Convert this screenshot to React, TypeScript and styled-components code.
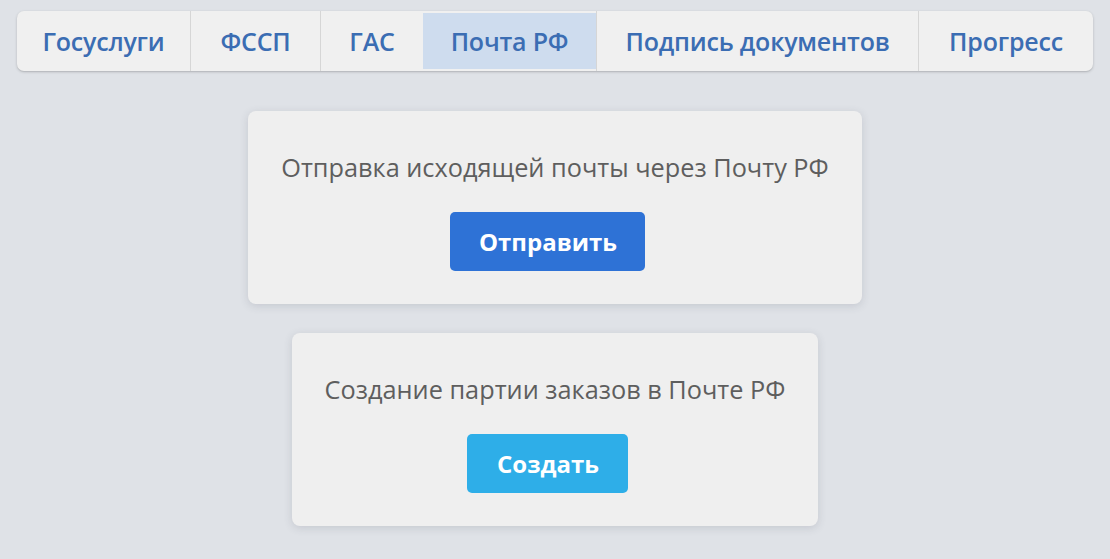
import React from "react";
import styled, { createGlobalStyle } from "styled-components";

const Global = createGlobalStyle`
  html, body { margin: 0; padding: 0; background: #dfe2e7; }
  body { font-family: "Open Sans", "Liberation Sans", sans-serif; }
`;

const Page = styled.div`
  display: flex;
  flex-direction: column;
  align-items: center;
  padding-top: 11px;
  min-height: 559px;
  box-sizing: border-box;
`;

const TabBar = styled.nav`
  display: flex;
  height: 60px;
  background: #f0f0f0;
  border-radius: 7px;
  box-shadow: 0 1px 3px rgba(0, 0, 0, 0.18), 0 1px 1px rgba(0, 0, 0, 0.06);
  overflow: hidden;
`;

const Tab = styled.button<{ $active?: boolean; $w: number }>`
  width: ${(p) => p.$w}px;
  border: none;
  border-left: ${(p) => (p.$active ? "none" : "1px solid #d6d6d6")};
  &:first-child { border-left: none; }
  background: ${(p) => (p.$active ? "#cedcee" : "transparent")};
  color: #3b6db3;
  font-family: "Open Sans", "Liberation Sans", sans-serif;
  font-weight: 600;
  font-size: 25px;
  letter-spacing: -0.2px;
  margin: ${(p) => (p.$active ? "2px 0" : "0")};
  padding: 0;
  cursor: pointer;
`;

const Cards = styled.div`
  display: flex;
  flex-direction: column;
  align-items: center;
  gap: 29px;
  margin-top: 40px;
`;

const Card = styled.section`
  display: flex;
  flex-direction: column;
  align-items: center;
  background: #efefef;
  border-radius: 8px;
  box-shadow: 0 2px 8px rgba(60, 70, 90, 0.16);
  padding: 39px 33px 33px;
  gap: 28px;
`;

const CardText = styled.p`
  margin: 0;
  font-size: 25.3px;
  line-height: 34px;
  color: #5e5e5e;
`;

const ActionButton = styled.button<{ $color: string; $w: number }>`
  width: ${(p) => p.$w}px;
  height: 59px;
  margin-right: 14px;
  border: none;
  border-radius: 5px;
  background: ${(p) => p.$color};
  color: #ffffff;
  font-family: "Open Sans", "Liberation Sans", sans-serif;
  font-weight: 700;
  font-size: 24px;
  cursor: pointer;
`;

const tabs = [
  { label: "Госуслуги", w: 173 },
  { label: "ФССП", w: 130 },
  { label: "ГАС", w: 103 },
  { label: "Почта РФ", w: 173, active: true },
  { label: "Подпись документов", w: 322 },
  { label: "Прогресс", w: 175 },
];

export default function App() {
  return (
    <>
      <Global />
      <Page>
        <TabBar>
          {tabs.map((t) => (
            <Tab key={t.label} $active={t.active} $w={t.w}>
              {t.label}
            </Tab>
          ))}
        </TabBar>
        <Cards>
          <Card>
            <CardText>Отправка исходящей почты через Почту РФ</CardText>
            <ActionButton $color="#2e72d6" $w={195}>Отправить</ActionButton>
          </Card>
          <Card>
            <CardText>Создание партии заказов в Почте РФ</CardText>
            <ActionButton $color="#2eaee8" $w={161}>Создать</ActionButton>
          </Card>
        </Cards>
      </Page>
    </>
  );
}
